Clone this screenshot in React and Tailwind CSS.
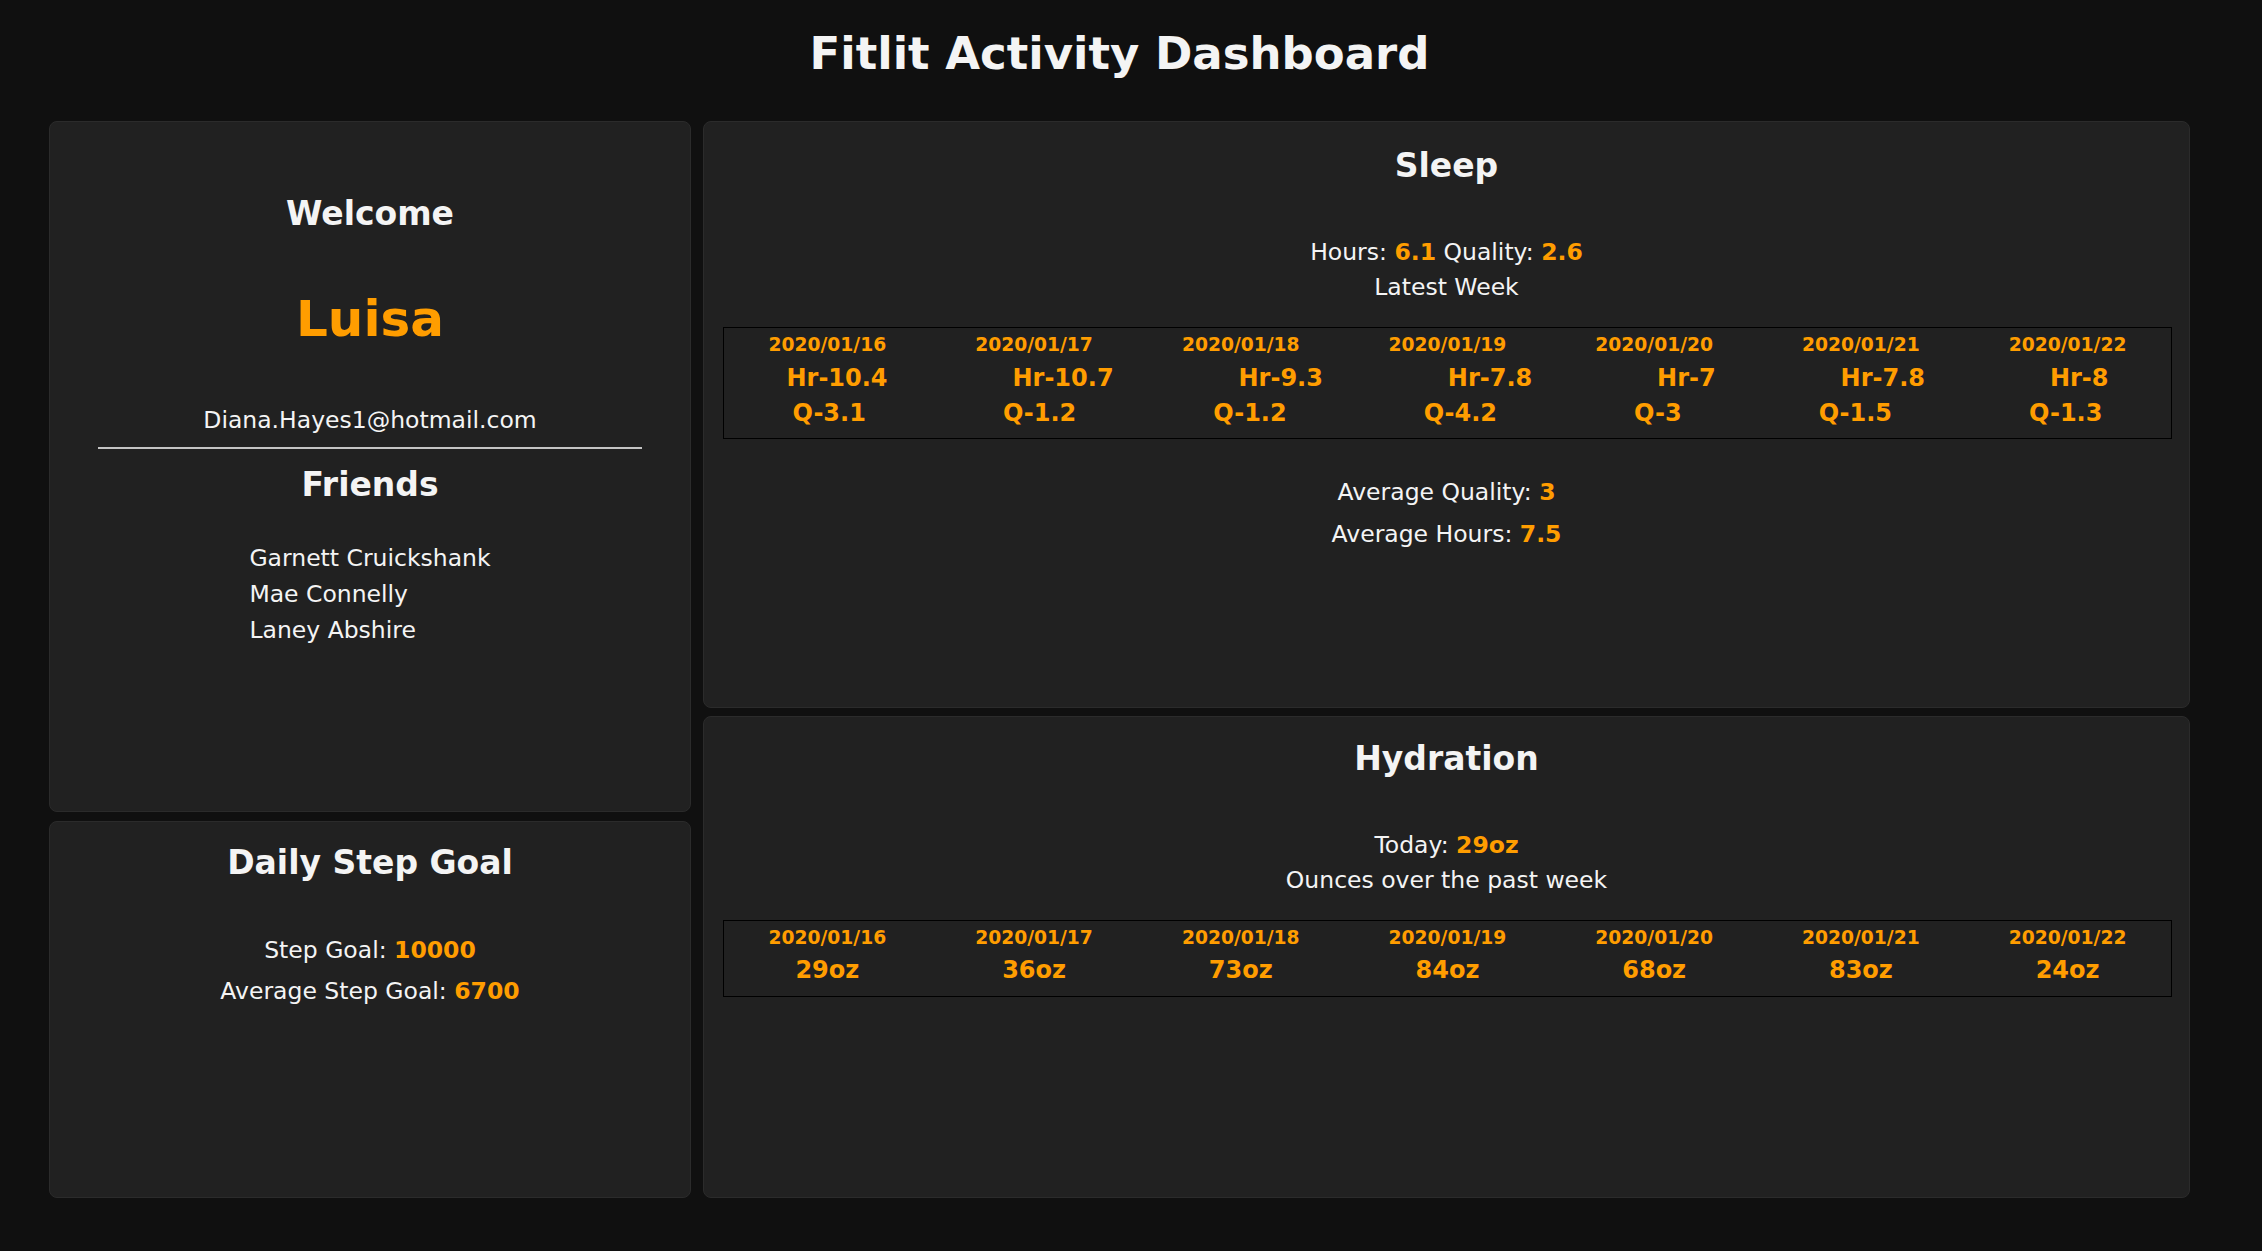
import React from "react";

const sleepWeek = [
  { date: "2020/01/16", hr: "10.4", q: "3.1" },
  { date: "2020/01/17", hr: "10.7", q: "1.2" },
  { date: "2020/01/18", hr: "9.3", q: "1.2" },
  { date: "2020/01/19", hr: "7.8", q: "4.2" },
  { date: "2020/01/20", hr: "7", q: "3" },
  { date: "2020/01/21", hr: "7.8", q: "1.5" },
  { date: "2020/01/22", hr: "8", q: "1.3" },
];

const waterWeek = [
  { date: "2020/01/16", oz: "29oz" },
  { date: "2020/01/17", oz: "36oz" },
  { date: "2020/01/18", oz: "73oz" },
  { date: "2020/01/19", oz: "84oz" },
  { date: "2020/01/20", oz: "68oz" },
  { date: "2020/01/21", oz: "83oz" },
  { date: "2020/01/22", oz: "24oz" },
];

function Val({ children }) {
  return <span className="font-bold text-[#ff9d00]">{children}</span>;
}

function Card({ className, children }) {
  return (
    <section
      className={
        "flex flex-col items-center rounded-[8px] border border-[#2b2b2b] bg-[#212121] " +
        className
      }
    >
      {children}
    </section>
  );
}

export default function App() {
  return (
    <div className="min-h-[1251px] w-full bg-[#101010] font-['DejaVu_Sans',sans-serif] text-[#f4f4f4]">
      <h1 className="h-[121px] pt-[31px] pr-[23px] text-center text-[45px] font-bold leading-[45px]">
        Fitlit Activity Dashboard
      </h1>

      <div className="flex gap-[12px] pl-[49px]">
        {/* Left column */}
        <div className="flex w-[642px] flex-col gap-[9px]">
          <Card className="h-[691px] pt-[72px]">
            <h2 className="text-[33px] font-bold leading-[40px]">Welcome</h2>
            <p className="mt-[55px] text-[50px] font-bold leading-[60px] text-[#ff9d00]">
              Luisa
            </p>
            <p className="mt-[57px] text-[23.5px] leading-[28px]">
              Diana.Hayes1@hotmail.com
            </p>
            <div className="mt-[13px] h-[2px] w-[85%] bg-[#c4c4c4]" />
            <h2 className="mt-[16px] text-[33px] font-bold leading-[40px]">Friends</h2>
            <ul className="mt-[35px] text-left text-[23.5px] leading-[36px]">
              <li>Garnett Cruickshank</li>
              <li>Mae Connelly</li>
              <li>Laney Abshire</li>
            </ul>
          </Card>

          <Card className="h-[377px] pt-[21px]">
            <h2 className="text-[33px] font-bold leading-[40px]">Daily Step Goal</h2>
            <p className="mt-[53px] text-[23.5px] leading-[28px]">
              Step Goal: <Val>10000</Val>
            </p>
            <p className="mt-[13px] text-[23.5px] leading-[28px]">
              Average Step Goal: <Val>6700</Val>
            </p>
          </Card>
        </div>

        {/* Right column */}
        <div className="flex w-[1487px] flex-col gap-[8px]">
          <Card className="h-[587px] pt-[24px]">
            <h2 className="text-[33px] font-bold leading-[40px]">Sleep</h2>
            <p className="mt-[52px] text-[23.5px] leading-[28px]">
              Hours: <Val>6.1</Val> Quality: <Val>2.6</Val>
            </p>
            <p className="mt-[7px] text-[23.5px] leading-[28px]">Latest Week</p>
            <div className="mt-[26px] ml-[19px] mr-[17px] self-stretch border border-black pt-[6px] pb-[11px] font-bold text-[#ff9d00]">
              <div className="flex justify-around text-[18.7px] leading-[22px]">
                {sleepWeek.map((d) => (
                  <span key={d.date}>{d.date}</span>
                ))}
              </div>
              <div className="mt-[8px] flex justify-around text-[24px] leading-[28px]">
                {sleepWeek.map((d) => (
                  <span key={d.date}>Hr-{d.hr}</span>
                ))}
              </div>
              <div className="mt-[7px] flex justify-around text-[24px] leading-[28px]">
                {sleepWeek.map((d) => (
                  <span key={d.date}>Q-{d.q}</span>
                ))}
              </div>
            </div>
            <p className="mt-[39px] text-[23.5px] leading-[28px]">
              Average Quality: <Val>3</Val>
            </p>
            <p className="mt-[14px] text-[23.5px] leading-[28px]">
              Average Hours: <Val>7.5</Val>
            </p>
          </Card>

          <Card className="h-[482px] pt-[22px]">
            <h2 className="text-[33px] font-bold leading-[40px]">Hydration</h2>
            <p className="mt-[52px] text-[23.5px] leading-[28px]">
              Today: <Val>29oz</Val>
            </p>
            <p className="mt-[7px] text-[23.5px] leading-[28px]">Ounces over the past week</p>
            <div className="mt-[26px] ml-[19px] mr-[17px] self-stretch border border-black pt-[6px] pb-[12px] font-bold text-[#ff9d00]">
              <div className="flex justify-around text-[18.7px] leading-[22px]">
                {waterWeek.map((d) => (
                  <span key={d.date}>{d.date}</span>
                ))}
              </div>
              <div className="mt-[7px] flex justify-around text-[24px] leading-[28px]">
                {waterWeek.map((d) => (
                  <span key={d.date}>{d.oz}</span>
                ))}
              </div>
            </div>
          </Card>
        </div>
      </div>
    </div>
  );
}
